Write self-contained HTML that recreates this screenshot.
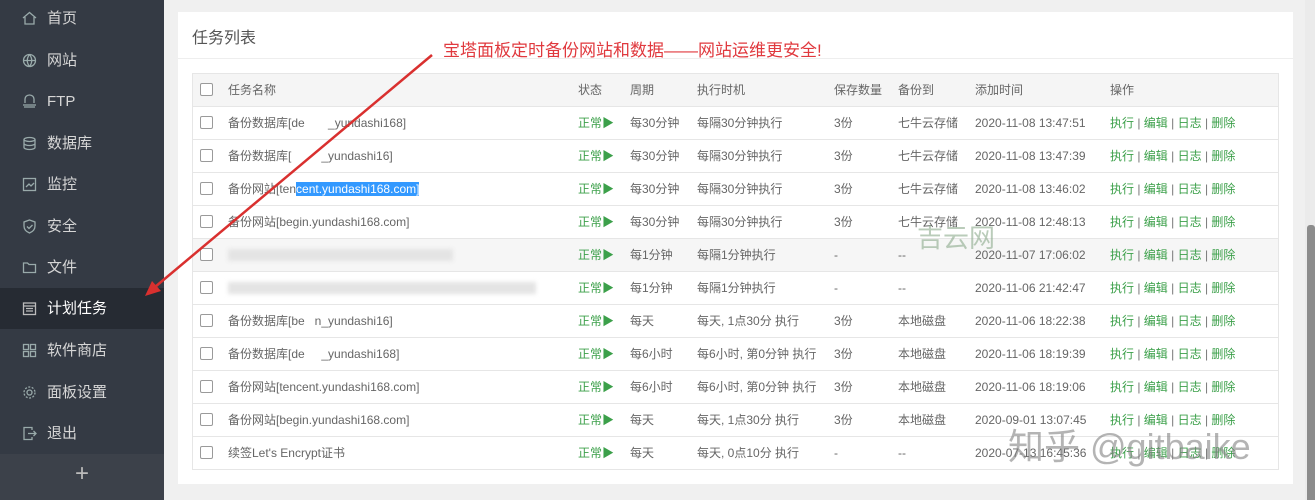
<!DOCTYPE html>
<html><head><meta charset="utf-8"><style>
*{margin:0;padding:0;box-sizing:border-box}
body{width:1315px;height:500px;overflow:hidden;background:#f0f0f0;font-family:"Liberation Sans","Noto Sans CJK SC",sans-serif;position:relative}
.side{position:absolute;left:0;top:0;width:164px;height:500px;background:#343a44}
.item{position:absolute;left:0;width:164px;height:41px;color:#d6d6d6;font-size:15px;line-height:41px;padding-left:47px}
.item.act{background:#262b33;color:#fff}
.item svg{position:absolute;left:22px;top:13px}
.plus{position:absolute;left:0;top:454px;width:164px;height:46px;background:#3c414a;color:#bbb;font-size:24px;text-align:center;line-height:40px}
.card{position:absolute;left:178px;top:12px;width:1115px;height:472px;background:#fff}
.title{position:absolute;left:14px;top:12px;font-size:16px;color:#555}
.hr{position:absolute;left:0;top:46px;width:100%;height:1px;background:#eee}
.tbl{position:absolute;left:14px;top:61px;width:1087px;border:1px solid #e6e6e6}
.row{position:relative;height:33px;border-top:1px solid #e6e6e6;font-size:12px;color:#666}
.row:first-child{border-top:none}
.row.h{background:#f5f5f5;height:32px;color:#666}
.row.g{background:#f6f6f6}
.row span{position:absolute;top:0;line-height:32px;white-space:nowrap}
.cb{position:absolute;left:7px;top:9px;width:13px;height:13px;border:1px solid #9a9a9a;border-radius:2px;background:#fff}
.ok{color:#3ca04a}
.op{color:#3ca04a}
.op i{font-style:normal;color:#777}
.blur{position:absolute;top:10px;height:12px;background:#e4e4e4;filter:blur(2px)}
.sb{position:absolute;left:1305px;top:0;width:10px;height:500px;background:#ebebeb}
.sb div{position:absolute;left:2px;top:225px;width:8px;height:275px;background:#8c8c8c;border-radius:3px 3px 0 0}
.ann{position:absolute;left:443px;top:36px;font-size:17px;color:#e0393e;white-space:nowrap}
.sel{background:#3399ff;color:#fff}
.wm{position:absolute;color:rgba(120,120,120,0.55);white-space:nowrap}
</style></head><body>
<div class="side">
<div class="item" style="top:-2px"><svg width="15" height="15" viewBox="0 0 15 15" fill="none" stroke="#9aa" stroke-width="1.3"><path d="M1 7L7.5 1.5 14 7M3 6v7h9V6"/></svg>首页</div>
<div class="item" style="top:40px"><svg width="15" height="15" viewBox="0 0 15 15" fill="none" stroke="#9aa" stroke-width="1.3"><circle cx="7.5" cy="7.5" r="6"/><path d="M1.5 7.5h12M7.5 1.5c-3 4-3 8 0 12M7.5 1.5c3 4 3 8 0 12"/></svg>网站</div>
<div class="item" style="top:81px"><svg width="15" height="15" viewBox="0 0 15 15" fill="none" stroke="#9aa" stroke-width="1.3"><path d="M3 9V5a4.5 4 0 0 1 9 0v4M1 11h13M2 13h11"/></svg>FTP</div>
<div class="item" style="top:123px"><svg width="15" height="15" viewBox="0 0 15 15" fill="none" stroke="#9aa" stroke-width="1.3"><ellipse cx="7.5" cy="3.5" rx="5.5" ry="2"/><path d="M2 3.5v8c0 1 2.5 2 5.5 2s5.5-1 5.5-2v-8M2 7.5c0 1 2.5 2 5.5 2s5.5-1 5.5-2"/></svg>数据库</div>
<div class="item" style="top:164px"><svg width="15" height="15" viewBox="0 0 15 15" fill="none" stroke="#9aa" stroke-width="1.3"><rect x="1.5" y="1.5" width="12" height="12"/><path d="M4 10l3-3 2 2 3-3"/></svg>监控</div>
<div class="item" style="top:206px"><svg width="15" height="15" viewBox="0 0 15 15" fill="none" stroke="#9aa" stroke-width="1.3"><path d="M7.5 1L13 3v4c0 4-3 6-5.5 7C5 13 2 11 2 7V3z"/><path d="M5 7.5l2 2 3.5-3.5"/></svg>安全</div>
<div class="item" style="top:247px"><svg width="15" height="15" viewBox="0 0 15 15" fill="none" stroke="#9aa" stroke-width="1.3"><path d="M1.5 3h4l1.5 1.5h6.5v8h-12z"/></svg>文件</div>
<div class="item act" style="top:288px"><svg width="15" height="15" viewBox="0 0 15 15" fill="none" stroke="#bbb" stroke-width="1.3"><rect x="1.5" y="2" width="12" height="11.5"/><path d="M1.5 5h12M4 7.5h7M4 10h7"/></svg>计划任务</div>
<div class="item" style="top:330px"><svg width="15" height="15" viewBox="0 0 15 15" fill="none" stroke="#9aa" stroke-width="1.3"><rect x="1.5" y="1.5" width="5" height="5"/><rect x="8.5" y="1.5" width="5" height="5"/><rect x="1.5" y="8.5" width="5" height="5"/><rect x="8.5" y="8.5" width="5" height="5"/></svg>软件商店</div>
<div class="item" style="top:372px"><svg width="15" height="15" viewBox="0 0 15 15" fill="none" stroke="#9aa" stroke-width="1.3"><circle cx="7.5" cy="7.5" r="2.5"/><circle cx="7.5" cy="7.5" r="5.5" stroke-dasharray="2 1.5"/></svg>面板设置</div>
<div class="item" style="top:413px"><svg width="15" height="15" viewBox="0 0 15 15" fill="none" stroke="#9aa" stroke-width="1.3"><path d="M10 4V1.5H2v12h8V11M6 7.5h8M11.5 5l2.5 2.5-2.5 2.5"/></svg>退出</div>
<div class="plus">+</div>
</div>
<div class="card">
<div class="title">任务列表</div>
<div class="hr"></div>
<div class="tbl">
<div class="row h"><div class="cb"></div><span style="left:35px">任务名称</span><span style="left:385px">状态</span><span style="left:437px">周期</span><span style="left:504px">执行时机</span><span style="left:641px">保存数量</span><span style="left:705px">备份到</span><span style="left:782px">添加时间</span><span style="left:917px">操作</span></div>
<div class="row"><div class="cb"></div><span style="left:35px">备份数据库[de&nbsp;&nbsp;&nbsp;&nbsp;&nbsp;&nbsp;&nbsp;_yundashi168]</span><span class="ok" style="left:385px">正常▶</span><span style="left:437px">每30分钟</span><span style="left:504px">每隔30分钟执行</span><span style="left:641px">3份</span><span style="left:705px">七牛云存储</span><span style="left:782px">2020-11-08 13:47:51</span><span class="op" style="left:917px">执行 <i>|</i> 编辑 <i>|</i> 日志 <i>|</i> 删除</span></div>
<div class="row"><div class="cb"></div><span style="left:35px">备份数据库[&nbsp;&nbsp;&nbsp;&nbsp;&nbsp;&nbsp;&nbsp;&nbsp;&nbsp;_yundashi16]</span><span class="ok" style="left:385px">正常▶</span><span style="left:437px">每30分钟</span><span style="left:504px">每隔30分钟执行</span><span style="left:641px">3份</span><span style="left:705px">七牛云存储</span><span style="left:782px">2020-11-08 13:47:39</span><span class="op" style="left:917px">执行 <i>|</i> 编辑 <i>|</i> 日志 <i>|</i> 删除</span></div>
<div class="row"><div class="cb"></div><span style="left:35px">备份网站[ten<b class="sel" style="font-weight:normal">cent.yundashi168.com]</b></span><span class="ok" style="left:385px">正常▶</span><span style="left:437px">每30分钟</span><span style="left:504px">每隔30分钟执行</span><span style="left:641px">3份</span><span style="left:705px">七牛云存储</span><span style="left:782px">2020-11-08 13:46:02</span><span class="op" style="left:917px">执行 <i>|</i> 编辑 <i>|</i> 日志 <i>|</i> 删除</span></div>
<div class="row"><div class="cb"></div><span style="left:35px">备份网站[begin.yundashi168.com]</span><span class="ok" style="left:385px">正常▶</span><span style="left:437px">每30分钟</span><span style="left:504px">每隔30分钟执行</span><span style="left:641px">3份</span><span style="left:705px">七牛云存储</span><span style="left:782px">2020-11-08 12:48:13</span><span class="op" style="left:917px">执行 <i>|</i> 编辑 <i>|</i> 日志 <i>|</i> 删除</span></div>
<div class="row g"><div class="cb"></div><div class="blur" style="left:35px;width:225px"></div><span class="ok" style="left:385px">正常▶</span><span style="left:437px">每1分钟</span><span style="left:504px">每隔1分钟执行</span><span style="left:641px">-</span><span style="left:705px">--</span><span style="left:782px">2020-11-07 17:06:02</span><span class="op" style="left:917px">执行 <i>|</i> 编辑 <i>|</i> 日志 <i>|</i> 删除</span></div>
<div class="row"><div class="cb"></div><div class="blur" style="left:35px;width:308px"></div><span class="ok" style="left:385px">正常▶</span><span style="left:437px">每1分钟</span><span style="left:504px">每隔1分钟执行</span><span style="left:641px">-</span><span style="left:705px">--</span><span style="left:782px">2020-11-06 21:42:47</span><span class="op" style="left:917px">执行 <i>|</i> 编辑 <i>|</i> 日志 <i>|</i> 删除</span></div>
<div class="row"><div class="cb"></div><span style="left:35px">备份数据库[be&nbsp;&nbsp;&nbsp;n_yundashi16]</span><span class="ok" style="left:385px">正常▶</span><span style="left:437px">每天</span><span style="left:504px">每天, 1点30分 执行</span><span style="left:641px">3份</span><span style="left:705px">本地磁盘</span><span style="left:782px">2020-11-06 18:22:38</span><span class="op" style="left:917px">执行 <i>|</i> 编辑 <i>|</i> 日志 <i>|</i> 删除</span></div>
<div class="row"><div class="cb"></div><span style="left:35px">备份数据库[de&nbsp;&nbsp;&nbsp;&nbsp;&nbsp;_yundashi168]</span><span class="ok" style="left:385px">正常▶</span><span style="left:437px">每6小时</span><span style="left:504px">每6小时, 第0分钟 执行</span><span style="left:641px">3份</span><span style="left:705px">本地磁盘</span><span style="left:782px">2020-11-06 18:19:39</span><span class="op" style="left:917px">执行 <i>|</i> 编辑 <i>|</i> 日志 <i>|</i> 删除</span></div>
<div class="row"><div class="cb"></div><span style="left:35px">备份网站[tencent.yundashi168.com]</span><span class="ok" style="left:385px">正常▶</span><span style="left:437px">每6小时</span><span style="left:504px">每6小时, 第0分钟 执行</span><span style="left:641px">3份</span><span style="left:705px">本地磁盘</span><span style="left:782px">2020-11-06 18:19:06</span><span class="op" style="left:917px">执行 <i>|</i> 编辑 <i>|</i> 日志 <i>|</i> 删除</span></div>
<div class="row"><div class="cb"></div><span style="left:35px">备份网站[begin.yundashi168.com]</span><span class="ok" style="left:385px">正常▶</span><span style="left:437px">每天</span><span style="left:504px">每天, 1点30分 执行</span><span style="left:641px">3份</span><span style="left:705px">本地磁盘</span><span style="left:782px">2020-09-01 13:07:45</span><span class="op" style="left:917px">执行 <i>|</i> 编辑 <i>|</i> 日志 <i>|</i> 删除</span></div>
<div class="row"><div class="cb"></div><span style="left:35px">续签Let's Encrypt证书</span><span class="ok" style="left:385px">正常▶</span><span style="left:437px">每天</span><span style="left:504px">每天, 0点10分 执行</span><span style="left:641px">-</span><span style="left:705px">--</span><span style="left:782px">2020-07-13 16:45:36</span><span class="op" style="left:917px">执行 <i>|</i> 编辑 <i>|</i> 日志 <i>|</i> 删除</span></div>
</div>
</div>
<div class="wm" style="left:917px;top:218px;font-size:26px;color:rgba(140,170,140,0.6)">吉云网</div>
<div class="wm" style="left:1008px;top:418px;font-size:36px;color:rgba(130,130,130,0.6)">知乎 @gitbaike</div>
<div class="sb"><div></div></div>
<div class="ann">宝塔面板定时备份网站和数据——网站运维更安全!</div>
<svg style="position:absolute;left:0;top:0" width="1315" height="500"><line x1="432" y1="55" x2="155" y2="287" stroke="#d9302f" stroke-width="2.5"/><path d="M145 296L152 281 161 291z" fill="#d9302f"/></svg>
</body></html>
